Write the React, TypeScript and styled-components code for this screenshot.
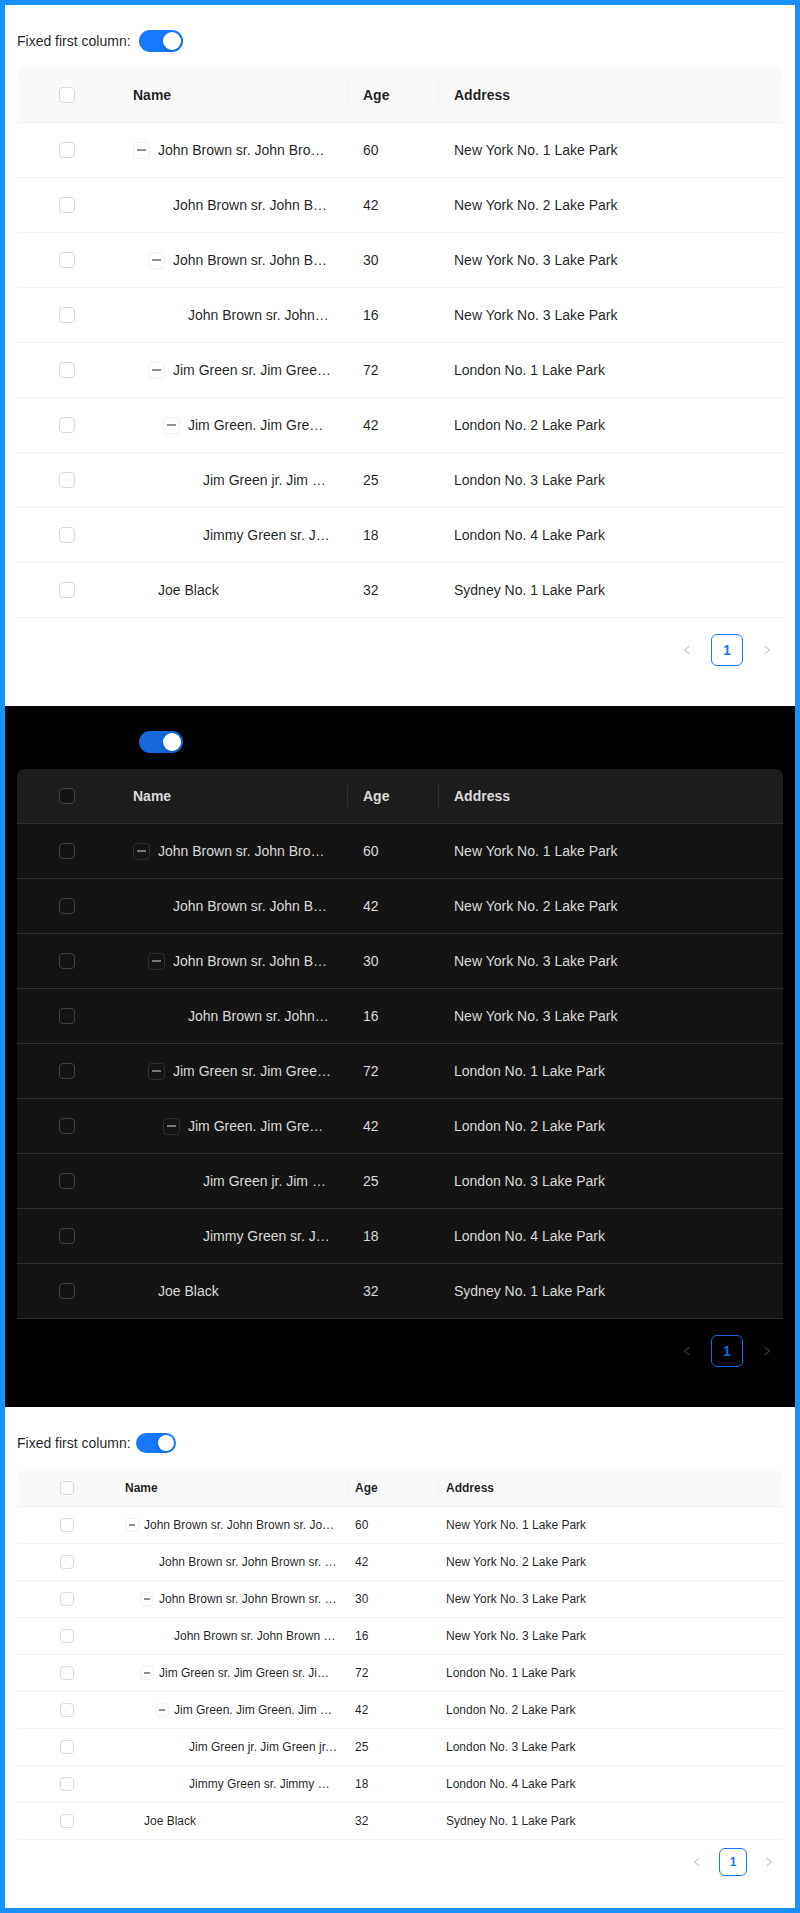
import styled, { createGlobalStyle, ThemeProvider } from 'styled-components';
import { AiOutlineLeft, AiOutlineRight } from 'react-icons/ai';

const GlobalStyle = createGlobalStyle`
  html, body {
    margin: 0;
    padding: 0;
  }
  body {
    font-family: 'Liberation Sans', Arial, sans-serif;
  }
  * {
    box-sizing: border-box;
  }
`;

type Tokens = {
  bg: string;
  text: string;
  label: string;
  headBg: string;
  rowBg: string;
  border: string;
  checkBorder: string;
  checkBg: string;
  primary: string;
  disabled: string;
  fontSize: number;
  lineHeight: number;
  cellPad: number;
  checkSize: number;
  expandSize: number;
  expandGap: number;
  switchW: number;
  switchH: number;
  switchGap: number;
  pageItem: number;
  pageTop: number;
  bottom: number;
};

const light: Tokens = {
  bg: '#fff',
  text: 'rgba(0, 0, 0, 0.88)',
  label: 'rgba(0, 0, 0, 0.88)',
  headBg: '#fafafa',
  rowBg: '#fff',
  border: '#f0f0f0',
  checkBorder: '#d9d9d9',
  checkBg: '#fff',
  primary: '#1677ff',
  disabled: 'rgba(0, 0, 0, 0.25)',
  fontSize: 14,
  lineHeight: 22,
  cellPad: 16,
  checkSize: 16,
  expandSize: 17,
  expandGap: 8,
  switchW: 44,
  switchH: 22,
  switchGap: 8,
  pageItem: 32,
  pageTop: 16,
  bottom: 40,
};

const dark: Tokens = {
  ...light,
  bg: '#000',
  text: 'rgba(255, 255, 255, 0.85)',
  label: '#000',
  headBg: '#1d1d1d',
  rowBg: '#141414',
  border: '#303030',
  checkBorder: '#424242',
  checkBg: '#141414',
  primary: '#1668dc',
  disabled: 'rgba(255, 255, 255, 0.25)',
};

const compact: Tokens = {
  ...light,
  fontSize: 12,
  lineHeight: 20,
  cellPad: 8,
  checkSize: 14,
  expandSize: 14,
  expandGap: 5,
  switchW: 40,
  switchH: 20,
  switchGap: 5,
  pageItem: 28,
  pageTop: 8,
  bottom: 32,
};

const Frame = styled.div`
  border: 5px solid #1890ff;
`;

const Section = styled.section`
  background: ${(p) => p.theme.bg};
  padding: 25px 12px ${(p) => p.theme.bottom}px;
`;

const Toolbar = styled.div`
  display: flex;
  align-items: center;
  gap: ${(p) => p.theme.switchGap}px;
  height: 22px;
  margin-bottom: 16px;
  font-size: 14px;
  line-height: 22px;
  color: ${(p) => p.theme.label};
`;

const Switch = styled.span`
  position: relative;
  display: inline-block;
  width: ${(p) => p.theme.switchW}px;
  height: ${(p) => p.theme.switchH}px;
  border-radius: ${(p) => p.theme.switchH / 2}px;
  background: ${(p) => p.theme.primary};

  &::after {
    content: '';
    position: absolute;
    top: 2px;
    right: 2px;
    width: ${(p) => p.theme.switchH - 4}px;
    height: ${(p) => p.theme.switchH - 4}px;
    border-radius: 50%;
    background: #fff;
    box-shadow: 0 2px 4px rgba(0, 35, 11, 0.2);
  }
`;

const Table = styled.div`
  border-radius: 8px 8px 0 0;
  overflow: hidden;
  font-size: ${(p) => p.theme.fontSize}px;
  line-height: ${(p) => p.theme.lineHeight}px;
  color: ${(p) => p.theme.text};
`;

type RowProps = { $head?: boolean };

const Row = styled.div<RowProps>`
  display: grid;
  grid-template-columns: 100px 230px 91px 1fr;
  background: ${(p) => (p.$head ? p.theme.headBg : p.theme.rowBg)};
  border-bottom: 1px solid ${(p) => p.theme.border};
  font-weight: ${(p) => (p.$head ? 600 : 400)};
`;

type CellProps = { $sep?: boolean; $center?: boolean };

const Cell = styled.div<CellProps>`
  position: relative;
  display: flex;
  align-items: center;
  justify-content: ${(p) => (p.$center ? 'center' : 'flex-start')};
  min-width: 0;
  overflow: hidden;
  padding: ${(p) => p.theme.cellPad}px;

  &::before {
    content: '';
    display: ${(p) => (p.$sep ? 'block' : 'none')};
    position: absolute;
    left: 0;
    top: 50%;
    width: 1px;
    height: 1.6em;
    transform: translateY(-50%);
    background: ${(p) => p.theme.border};
  }
`;

type NameCellProps = { $level: number };

const NameCell = styled(Cell)<NameCellProps>`
  padding-left: ${(p) => p.theme.cellPad + p.$level * 15}px;
`;

const Checkbox = styled.span`
  display: block;
  width: ${(p) => p.theme.checkSize}px;
  height: ${(p) => p.theme.checkSize}px;
  border: 1px solid ${(p) => p.theme.checkBorder};
  border-radius: 4px;
  background: ${(p) => p.theme.checkBg};
`;

type ExpandProps = { $leaf?: boolean };

const Expand = styled.span<ExpandProps>`
  position: relative;
  flex: none;
  width: ${(p) => p.theme.expandSize}px;
  height: ${(p) => p.theme.expandSize}px;
  margin-right: ${(p) => p.theme.expandGap}px;
  border: 1px solid ${(p) => p.theme.border};
  border-radius: 4px;
  background: ${(p) => p.theme.rowBg};
  visibility: ${(p) => (p.$leaf ? 'hidden' : 'visible')};

  &::after {
    content: '';
    position: absolute;
    left: 3px;
    right: 3px;
    top: 50%;
    height: 1px;
    transform: translateY(-50%);
    background: currentColor;
  }
`;

const Ellipsis = styled.span`
  flex: 1;
  min-width: 0;
  overflow: hidden;
  white-space: nowrap;
  text-overflow: ellipsis;
`;

const Pager = styled.div`
  display: flex;
  justify-content: flex-end;
  gap: 8px;
  margin-top: ${(p) => p.theme.pageTop}px;
`;

type PageProps = { $active?: boolean };

const PageItem = styled.span<PageProps>`
  display: flex;
  align-items: center;
  justify-content: center;
  width: ${(p) => p.theme.pageItem}px;
  height: ${(p) => p.theme.pageItem}px;
  border: 1px solid ${(p) => (p.$active ? p.theme.primary : 'transparent')};
  border-radius: 6px;
  font-size: ${(p) => p.theme.fontSize}px;
  font-weight: 600;
  color: ${(p) => (p.$active ? p.theme.primary : p.theme.disabled)};
`;

type Person = { name: string; age: number; address: string; level: number; parent: boolean };

const rep = (s: string) => Array(4).fill(s).join(' ');

const people: Person[] = [
  { name: rep('John Brown sr.'), age: 60, address: 'New York No. 1 Lake Park', level: 0, parent: true },
  { name: rep('John Brown sr.'), age: 42, address: 'New York No. 2 Lake Park', level: 1, parent: false },
  { name: rep('John Brown sr.'), age: 30, address: 'New York No. 3 Lake Park', level: 1, parent: true },
  { name: rep('John Brown sr.'), age: 16, address: 'New York No. 3 Lake Park', level: 2, parent: false },
  { name: rep('Jim Green sr.'), age: 72, address: 'London No. 1 Lake Park', level: 1, parent: true },
  { name: rep('Jim Green.'), age: 42, address: 'London No. 2 Lake Park', level: 2, parent: true },
  { name: rep('Jim Green jr.'), age: 25, address: 'London No. 3 Lake Park', level: 3, parent: false },
  { name: rep('Jimmy Green sr.'), age: 18, address: 'London No. 4 Lake Park', level: 3, parent: false },
  { name: 'Joe Black', age: 32, address: 'Sydney No. 1 Lake Park', level: 0, parent: false },
];

function TreeTable({ theme }: { theme: Tokens }) {
  return (
    <ThemeProvider theme={theme}>
      <Section>
        <Toolbar>
          Fixed first column:
          <Switch />
        </Toolbar>
        <Table>
          <Row $head>
            <Cell $center>
              <Checkbox />
            </Cell>
            <Cell>Name</Cell>
            <Cell $sep>Age</Cell>
            <Cell $sep>Address</Cell>
          </Row>
          {people.map((p, i) => (
            <Row key={i}>
              <Cell $center>
                <Checkbox />
              </Cell>
              <NameCell $level={p.level}>
                <Expand $leaf={!p.parent} />
                <Ellipsis>{p.name}</Ellipsis>
              </NameCell>
              <Cell>{p.age}</Cell>
              <Cell>{p.address}</Cell>
            </Row>
          ))}
        </Table>
        <Pager>
          <PageItem>
            <AiOutlineLeft size={12} />
          </PageItem>
          <PageItem $active>1</PageItem>
          <PageItem>
            <AiOutlineRight size={12} />
          </PageItem>
        </Pager>
      </Section>
    </ThemeProvider>
  );
}

export default function App() {
  return (
    <>
      <GlobalStyle />
      <Frame>
        <TreeTable theme={light} />
        <TreeTable theme={dark} />
        <TreeTable theme={compact} />
      </Frame>
    </>
  );
}
